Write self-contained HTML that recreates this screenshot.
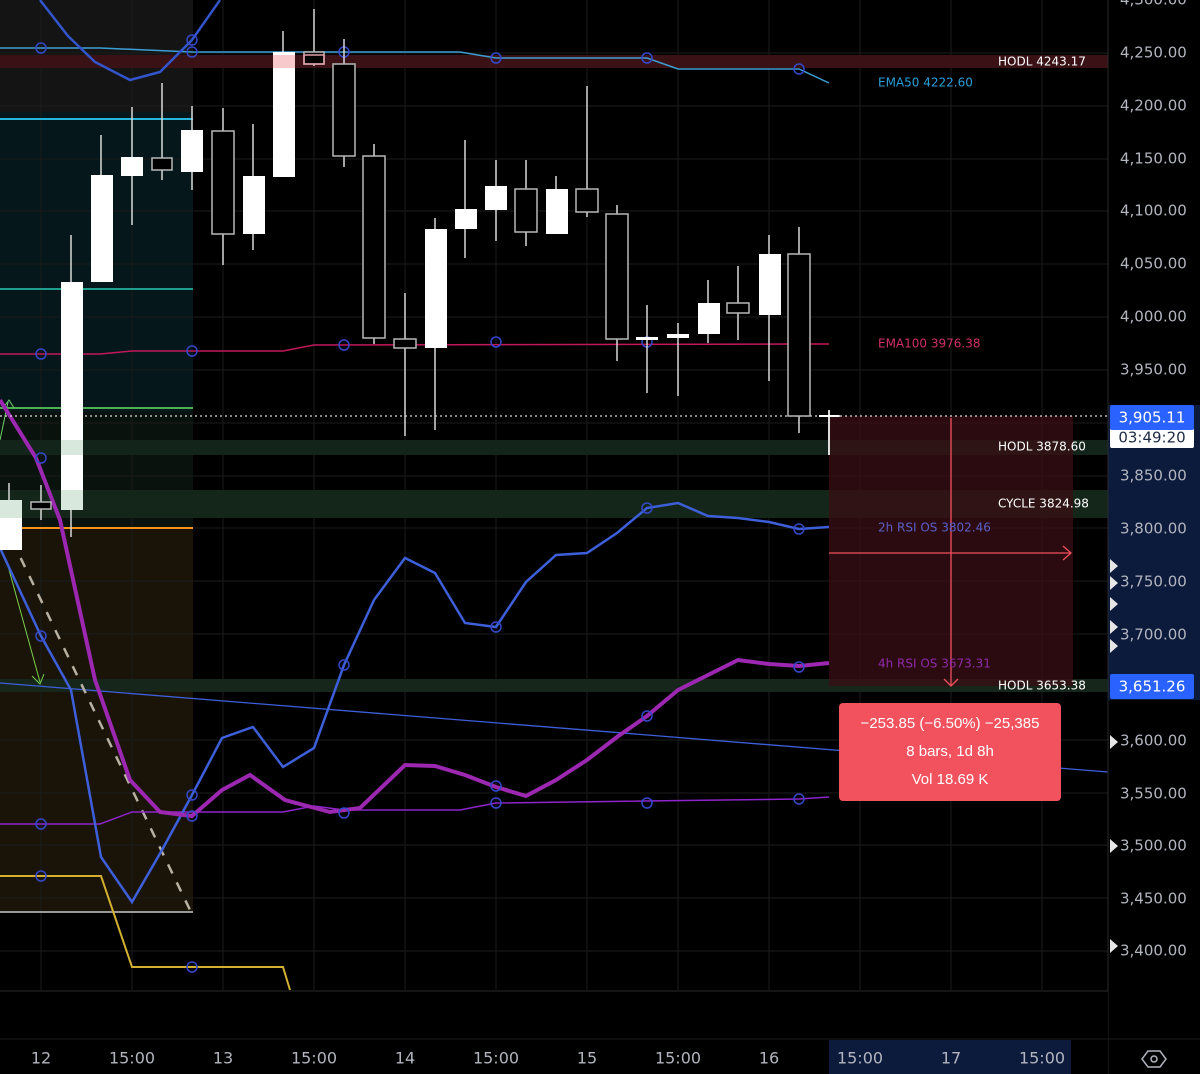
<!DOCTYPE html>
<html><head><meta charset="utf-8"><style>
html,body{margin:0;padding:0;background:#000;}
svg{display:block;font-family:"DejaVu Sans","Liberation Sans",sans-serif;}
</style></head><body>
<svg width="1200" height="1074" viewBox="0 0 1200 1074" xmlns="http://www.w3.org/2000/svg">
<rect width="1200" height="1074" fill="#000"/>
<rect x="0" y="0" width="193" height="112" fill="#141414"/>
<rect x="0" y="112" width="193" height="300" fill="#05171a"/>
<rect x="0" y="412" width="193" height="116" fill="#0a120e"/>
<rect x="0" y="528" width="193" height="385" fill="#1a1408"/>
<g stroke="#1b1b1b" stroke-width="1">
<line x1="41" y1="0" x2="41" y2="990"/><line x1="132" y1="0" x2="132" y2="990"/><line x1="223" y1="0" x2="223" y2="990"/><line x1="314" y1="0" x2="314" y2="990"/><line x1="405" y1="0" x2="405" y2="990"/><line x1="496" y1="0" x2="496" y2="990"/><line x1="587" y1="0" x2="587" y2="990"/><line x1="678" y1="0" x2="678" y2="990"/><line x1="769" y1="0" x2="769" y2="990"/><line x1="860" y1="0" x2="860" y2="990"/><line x1="951" y1="0" x2="951" y2="990"/><line x1="1042" y1="0" x2="1042" y2="990"/>
<line x1="0" y1="53" x2="1108" y2="53"/><line x1="0" y1="106" x2="1108" y2="106"/><line x1="0" y1="159" x2="1108" y2="159"/><line x1="0" y1="211" x2="1108" y2="211"/><line x1="0" y1="264" x2="1108" y2="264"/><line x1="0" y1="317" x2="1108" y2="317"/><line x1="0" y1="370" x2="1108" y2="370"/><line x1="0" y1="423" x2="1108" y2="423"/><line x1="0" y1="476" x2="1108" y2="476"/><line x1="0" y1="528" x2="1108" y2="528"/><line x1="0" y1="581" x2="1108" y2="581"/><line x1="0" y1="634" x2="1108" y2="634"/><line x1="0" y1="687" x2="1108" y2="687"/><line x1="0" y1="740" x2="1108" y2="740"/><line x1="0" y1="793" x2="1108" y2="793"/><line x1="0" y1="845" x2="1108" y2="845"/><line x1="0" y1="898" x2="1108" y2="898"/><line x1="0" y1="951" x2="1108" y2="951"/>
</g>
<rect x="0" y="55" width="1108" height="13" fill="#3a1216"/>
<rect x="0" y="440" width="1108" height="15" fill="#13241a"/>
<rect x="0" y="490" width="1108" height="28" fill="#14261a"/>
<rect x="0" y="679" width="1108" height="13" fill="#16261a"/>
<rect x="829" y="416" width="244" height="270" fill="#3a0f14" opacity="0.75"/>
<line x1="0" y1="119" x2="193" y2="119" stroke="#26b6dc" stroke-width="2"/>
<line x1="0" y1="289" x2="193" y2="289" stroke="#1f9e8e" stroke-width="2"/>
<line x1="0" y1="408" x2="193" y2="408" stroke="#4caf50" stroke-width="2"/>
<line x1="0" y1="528" x2="193" y2="528" stroke="#f7931a" stroke-width="2"/>
<line x1="0" y1="912" x2="193" y2="912" stroke="#9a9a9a" stroke-width="2"/>
<line x1="0" y1="683" x2="1108" y2="772" stroke="#3d5fd9" stroke-width="1.3"/>
<line x1="12" y1="540" x2="190" y2="910" stroke="#b8b0a0" stroke-width="2.5" stroke-dasharray="10,10"/>
<polyline points="0,440 8,402" stroke="#6ccf6c" fill="none" stroke-width="1"/>
<polyline points="3,408 9,400 14,408" stroke="#6ccf6c" fill="none" stroke-width="1"/>
<polyline points="8,566 40,682" stroke="#7ad04a" fill="none" stroke-width="1"/>
<polyline points="32,676 40,684 44,674" stroke="#7ad04a" fill="none" stroke-width="1"/>
<polyline points="0,48 100,48 192,52 340,52 460,52 496,58 647,58 678,69 799,69 829,83" stroke="#3e9ed3" fill="none" stroke-width="1.5"/>
<polyline points="40,0 68,36 95,62 130,80 160,72 192,40 220,0" stroke="#3355cc" fill="none" stroke-width="2.5"/>
<polyline points="0,354 100,354 132,351 192,351 283,351 314,345 799,344 829,344" stroke="#c2185b" fill="none" stroke-width="1.5"/>
<polyline points="0,876 101,876 132,967 283,967 290,990" stroke="#d4b030" fill="none" stroke-width="2"/>
<polyline points="0,824 100,824 132,812 283,812 314,806 344,810 460,810 496,803 799,799 829,797" stroke="#8e24cc" fill="none" stroke-width="1.5"/>
<polyline points="0,548 41,636 71,690 101,857 132,902 162,850 192,795 222,738 253,727 283,767 314,748 344,665 374,600 405,558 435,573 465,623 496,627 526,582 556,555 587,553 617,533 647,508 678,503 708,516 738,518 769,522 799,529 829,527" stroke="#3d5fd9" fill="none" stroke-width="2.5"/>
<polyline points="0,400 36,458 60,520 95,680 130,780 160,812 192,816 222,790 250,775 285,800 330,812 360,808 405,765 435,766 465,775 496,787 526,796 556,780 587,760 617,737 647,716 678,690 708,675 738,660 769,664 799,666 829,663" stroke="#9c27b0" fill="none" stroke-width="4"/>
<g fill="none" stroke="#3548c8" stroke-width="1.5">
<circle cx="41" cy="48" r="5"/><circle cx="192" cy="40" r="5"/><circle cx="192" cy="52" r="5"/><circle cx="344" cy="52" r="5"/><circle cx="496" cy="58" r="5"/><circle cx="647" cy="58" r="5"/><circle cx="799" cy="69" r="5"/>
<circle cx="41" cy="354" r="5"/><circle cx="192" cy="351" r="5"/><circle cx="344" cy="345" r="5"/><circle cx="496" cy="342" r="5"/><circle cx="647" cy="342" r="5"/><circle cx="799" cy="342" r="5"/>
<circle cx="41" cy="458" r="5"/><circle cx="41" cy="636" r="5"/><circle cx="192" cy="795" r="5"/><circle cx="192" cy="816" r="5"/><circle cx="344" cy="665" r="5"/><circle cx="344" cy="813" r="5"/><circle cx="496" cy="627" r="5"/><circle cx="496" cy="786" r="5"/><circle cx="647" cy="508" r="5"/><circle cx="647" cy="716" r="5"/><circle cx="799" cy="529" r="5"/><circle cx="799" cy="667" r="5"/>
<circle cx="41" cy="824" r="5"/><circle cx="496" cy="803" r="5"/><circle cx="647" cy="803" r="5"/><circle cx="799" cy="799" r="5"/><circle cx="41" cy="876" r="5"/><circle cx="192" cy="967" r="5"/>
</g>
<line x1="0" y1="416" x2="1108" y2="416" stroke="#ddd" stroke-width="1.3" stroke-dasharray="2,3"/>
<g stroke="#d8d8d8" stroke-width="1.5">
<line x1="9" y1="483" x2="9" y2="550"/><line x1="41" y1="485" x2="41" y2="520"/><line x1="71" y1="235" x2="71" y2="537"/><line x1="101" y1="135" x2="101" y2="282"/><line x1="132" y1="107" x2="132" y2="225"/><line x1="162" y1="83" x2="162" y2="180"/><line x1="192" y1="106" x2="192" y2="190"/><line x1="223" y1="108" x2="223" y2="265"/><line x1="253" y1="124" x2="253" y2="250"/><line x1="283" y1="31" x2="283" y2="175"/><line x1="314" y1="9" x2="314" y2="66"/><line x1="344" y1="39" x2="344" y2="167"/><line x1="374" y1="144" x2="374" y2="344"/><line x1="405" y1="293" x2="405" y2="436"/><line x1="435" y1="218" x2="435" y2="430"/><line x1="465" y1="140" x2="465" y2="258"/><line x1="496" y1="160" x2="496" y2="241"/><line x1="526" y1="160" x2="526" y2="246"/><line x1="556" y1="176" x2="556" y2="234"/><line x1="587" y1="86" x2="587" y2="217"/><line x1="617" y1="205" x2="617" y2="361"/><line x1="647" y1="305" x2="647" y2="393"/><line x1="678" y1="323" x2="678" y2="396"/><line x1="708" y1="280" x2="708" y2="343"/><line x1="738" y1="266" x2="738" y2="340"/><line x1="769" y1="235" x2="769" y2="381"/><line x1="799" y1="227" x2="799" y2="433"/><line x1="829" y1="410" x2="829" y2="455"/>
</g>
<g fill="#fff">
<rect x="0" y="500" width="22" height="50"/><rect x="61" y="282" width="22" height="228"/><rect x="91" y="175" width="22" height="107"/><rect x="121" y="157" width="22" height="19"/><rect x="181" y="130" width="22" height="42"/><rect x="243" y="176" width="22" height="58"/><rect x="273" y="52" width="22" height="125"/><rect x="425" y="229" width="22" height="119"/><rect x="455" y="209" width="22" height="20"/><rect x="485" y="186" width="22" height="24"/><rect x="546" y="189" width="22" height="45"/><rect x="698" y="303" width="22" height="31"/><rect x="759" y="254" width="22" height="61"/>
<rect x="636" y="337" width="22" height="3"/><rect x="667" y="334" width="22" height="4"/><rect x="819" y="415" width="20" height="2"/>
</g>
<rect x="273" y="55" width="22" height="13" fill="#f7c8cc"/>
<rect x="61" y="440" width="22" height="15" fill="#d8e8dc"/><rect x="61" y="490" width="22" height="20" fill="#d8e8dc"/><rect x="0" y="500" width="22" height="18" fill="#d8e8dc"/>
<g fill="#000" stroke="#b8b8b8" stroke-width="1.5">
<rect x="31" y="502" width="20" height="7"/><rect x="152" y="158" width="20" height="12"/><rect x="212" y="131" width="22" height="103"/><rect x="304" y="52" width="20" height="12"/><rect x="333" y="64" width="22" height="92"/><rect x="363" y="156" width="22" height="182"/><rect x="394" y="339" width="22" height="9"/><rect x="515" y="189" width="22" height="43"/><rect x="576" y="189" width="22" height="23"/><rect x="606" y="214" width="22" height="125"/><rect x="727" y="303" width="22" height="10"/><rect x="788" y="254" width="22" height="162"/>
</g>
<rect x="304" y="55" width="20" height="9" fill="none" stroke="#e0a0a8" stroke-width="1.5"/>
<g stroke="#f0525e" stroke-width="1.3" fill="none">
<line x1="951" y1="418" x2="951" y2="686"/><polyline points="944,679 951,686 958,679"/>
<line x1="829" y1="553" x2="1071" y2="553"/><polyline points="1063,546 1071,553 1063,560"/>
</g>
<line x1="829" y1="410" x2="829" y2="455" stroke="#fff" stroke-width="1.5"/>
<line x1="819" y1="416" x2="840" y2="416" stroke="#fff" stroke-width="1.5"/>
<g font-size="12" dominant-baseline="middle">
<text x="998" y="62" fill="#fff">HODL 4243.17</text>
<text x="878" y="83" fill="#2a9fd6">EMA50 4222.60</text>
<text x="878" y="344" fill="#d0306a">EMA100 3976.38</text>
<text x="998" y="447" fill="#fff">HODL 3878.60</text>
<text x="998" y="504" fill="#fff">CYCLE 3824.98</text>
<text x="878" y="528" fill="#5a5fc8">2h RSI OS 3802.46</text>
<text x="878" y="664" fill="#8e2aa8">4h RSI OS 3673.31</text>
<text x="998" y="686" fill="#fff">HODL 3653.38</text>
</g>
<rect x="839" y="703" width="222" height="98" rx="4" fill="#f2525e"/>
<g font-size="15" fill="#fff" text-anchor="middle" dominant-baseline="middle" font-family="Liberation Sans, sans-serif">
<text x="950" y="724">−253.85 (−6.50%) −25,385</text>
<text x="950" y="752">8 bars, 1d 8h</text>
<text x="950" y="780">Vol 18.69 K</text>
</g>
<rect x="1108" y="0" width="92" height="1074" fill="#000"/>
<rect x="1108" y="405" width="92" height="295" fill="#0c1a3c"/>
<line x1="1108" y1="0" x2="1108" y2="1074" stroke="#2a2a2a"/>
<g font-size="15" fill="#b2b5be" dominant-baseline="middle">
<text x="1120" y="0">4,300.00</text><text x="1120" y="53">4,250.00</text><text x="1120" y="106">4,200.00</text><text x="1120" y="159">4,150.00</text><text x="1120" y="211">4,100.00</text><text x="1120" y="264">4,050.00</text><text x="1120" y="317">4,000.00</text><text x="1120" y="370">3,950.00</text><text x="1120" y="476">3,850.00</text><text x="1120" y="529">3,800.00</text><text x="1120" y="582">3,750.00</text><text x="1120" y="635">3,700.00</text><text x="1120" y="741">3,600.00</text><text x="1120" y="794">3,550.00</text><text x="1120" y="846">3,500.00</text><text x="1120" y="899">3,450.00</text><text x="1120" y="951">3,400.00</text>
</g>
<g fill="#e6e6e6">
<polygon points="1110,559 1118,566 1110,573"/><polygon points="1110,576 1118,583 1110,590"/><polygon points="1110,597 1118,604 1110,611"/><polygon points="1110,620 1118,627 1110,634"/><polygon points="1110,639 1118,646 1110,653"/><polygon points="1110,735 1118,742 1110,749"/><polygon points="1110,839 1118,846 1110,853"/><polygon points="1110,939 1118,946 1110,953"/>
</g>
<rect x="1110" y="428" width="84" height="20" rx="2" fill="#fff"/>
<text x="1152" y="438" font-size="15" fill="#1e2a44" text-anchor="middle" dominant-baseline="middle">03:49:20</text>
<rect x="1110" y="405" width="84" height="25" rx="2" fill="#2962ff"/>
<text x="1152" y="418" font-size="15" fill="#fff" text-anchor="middle" dominant-baseline="middle">3,905.11</text>
<rect x="1110" y="674" width="84" height="25" rx="2" fill="#2962ff"/>
<text x="1152" y="687" font-size="15" fill="#fff" text-anchor="middle" dominant-baseline="middle">3,651.26</text>
<rect x="0" y="991" width="1108" height="83" fill="#000"/>
<line x1="0" y1="991" x2="1108" y2="991" stroke="#2a2a2a"/>
<line x1="0" y1="1039" x2="1200" y2="1039" stroke="#1c1c1c"/>
<rect x="829" y="1040" width="242" height="34" fill="#0c1a3c"/>
<g font-size="16" fill="#b2b5be" text-anchor="middle" dominant-baseline="middle">
<text x="41" y="1059">12</text><text x="132" y="1059">15:00</text><text x="223" y="1059">13</text><text x="314" y="1059">15:00</text><text x="405" y="1059">14</text><text x="496" y="1059">15:00</text><text x="587" y="1059">15</text><text x="678" y="1059">15:00</text><text x="769" y="1059">16</text><text x="860" y="1059">15:00</text><text x="951" y="1059">17</text><text x="1042" y="1059">15:00</text>
</g>
<polygon points="1148,1051 1160,1051 1166,1059 1160,1067 1148,1067 1142,1059" fill="none" stroke="#b2b5be" stroke-width="1.5"/>
<circle cx="1154" cy="1059" r="3" fill="none" stroke="#b2b5be" stroke-width="1.5"/>
</svg>
</body></html>
